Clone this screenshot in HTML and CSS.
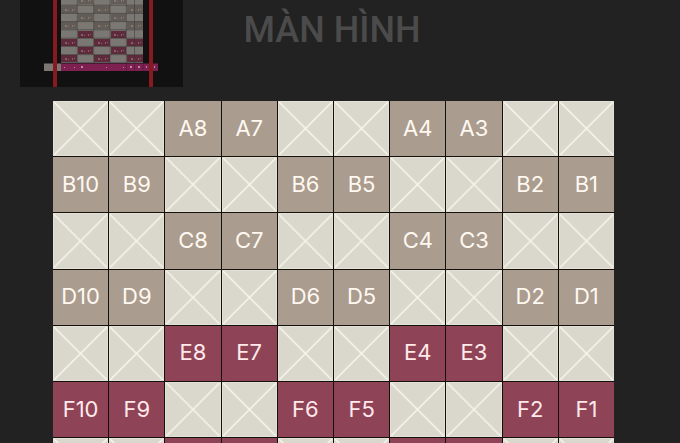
FILE: index.html
```
<!DOCTYPE html>
<html lang="vi">
<head>
<meta charset="utf-8">
<meta name="viewport" content="width=device-width, initial-scale=1">
<title>Màn hình</title>
<link rel="stylesheet" href="styles.css">
</head>
<body>
<main class="room">
<header class="top">
<svg class="minimap" viewBox="0 0 163 87" aria-hidden="true">
<defs>
<g id="dots" fill="#a39994"><path d="M4 3h2v2h-2zM7 4h1v1h-1zM11 3h1v2h-1zM13 3h1v1h-1z" opacity=".5"/></g>
<g id="odd"><path d="M0 0h16v7h-16zM33 0h16v7h-16zM66 0h16v7h-16z"/><use href="#dots"/><use href="#dots" x="33"/><use href="#dots" x="66"/></g>
<g id="even"><path d="M17 0h15v7h-15zM50 0h15v7h-15z"/><use href="#dots" x="16"/><use href="#dots" x="49"/></g>
</defs>
<rect width="163" height="87" fill="#111"/>
<path d="M41 0h82v63h-82z" fill="#7b7873"/>
<g fill="#635b56"><use href="#even" x="41" y="-3"/><use href="#odd" x="41" y="6"/><use href="#even" x="41" y="14"/><use href="#odd" x="41" y="22"/></g>
<g fill="#5f2a3c"><use href="#even" x="41" y="31"/><use href="#odd" x="41" y="39"/><use href="#even" x="41" y="47"/><use href="#odd" x="41" y="55"/></g>
<path d="M41 5.2h82M41 13.4h82M41 21.6h82M41 29.8h82M41 38.2h82M41 46.4h82M41 54.6h82M41 62.8h82" stroke="#2b2928" stroke-width=".5"/>
<path d="M57.3 0v63M73.7 0v63M90 0v63M106.3 0v63M114.5 0v63" stroke="#383533" stroke-width=".5"/>
<path d="M24 63.5h17v7.5h-17z" fill="#7b7873"/>
<path d="M41 63.5h97v7.5h-97z" fill="#7e2052"/>
<path d="M106.5 63.5v7.5M114.5 63.5v7.5M123 63.5v7.5" stroke="#4a1834" stroke-width=".6"/>
<path d="M44 67h1v1h-1zM54 67h1v1h-1zM61 66h2v2h-2zM86 67h1v1h-1zM103 67h1v1h-1zM110 66h2v2h-2zM118 66h2v2h-2zM126 66h1v2h-1zM134 66h1v2h-1z" fill="#b88aa0"/>
<path d="M33 0h4v87h-4zM129 0h4v87h-4z" fill="#861a1e"/>
</svg>
<h1 class="screen">MÀN HÌNH</h1>
</header>
<section class="seats" aria-label="Sơ đồ ghế">
<i></i><i></i><button>A8</button><button>A7</button><i></i><i></i><button>A4</button><button>A3</button><i></i><i></i>
<button>B10</button><button>B9</button><i></i><i></i><button>B6</button><button>B5</button><i></i><i></i><button>B2</button><button>B1</button>
<i></i><i></i><button>C8</button><button>C7</button><i></i><i></i><button>C4</button><button>C3</button><i></i><i></i>
<button>D10</button><button>D9</button><i></i><i></i><button>D6</button><button>D5</button><i></i><i></i><button>D2</button><button>D1</button>
<i></i><i></i><button class="vip">E8</button><button class="vip">E7</button><i></i><i></i><button class="vip">E4</button><button class="vip">E3</button><i></i><i></i>
<button class="vip">F10</button><button class="vip">F9</button><i></i><i></i><button class="vip">F6</button><button class="vip">F5</button><i></i><i></i><button class="vip">F2</button><button class="vip">F1</button>
<i></i><i></i><b></b><b></b><i></i><i></i><b></b><b></b><i></i><i></i>
</section>
</main>
</body>
</html>
```
FILE: styles.css
```
* {
  box-sizing: border-box;
}

body {
  margin: 0;
  background: #222;
  font-family: Inter, "Liberation Sans", sans-serif;
}

.room {
  height: 100vh;
  overflow: hidden;
}

.top {
  display: grid;
  grid-template-columns: 1fr auto 1fr;
  align-items: start;
  padding: 0 36px 0 20px;
}

.minimap {
  display: block;
  width: 163px;
  height: 87px;
}

.screen {
  margin: 9px 0 0;
  color: #4b4b4b;
  font-family: Roboto, sans-serif;
  font-size: 36px;
  font-weight: 500;
  line-height: 42px;
}

.seats {
  display: grid;
  grid-template-columns: repeat(10, 1fr);
  gap: 1px;
  margin: 14px 66px 0 53px;
  background: #14110c;
}

.seats > * {
  aspect-ratio: 1;
  min-width: 0;
}

.seats i {
  box-shadow: inset 0 0 0 1px #e3e0d6;
  background:
    linear-gradient(45deg, transparent 48%, #f6f4ea 50%, transparent 52%),
    linear-gradient(-45deg, transparent 48%, #f6f4ea 50%, transparent 52%),
    #dad7cc;
}

.seats button {
  padding: 0 0 2px;
  border: 0;
  background: #aa9c8f;
  color: #fff8f0;
  font: 400 22px/26px Inter, "Liberation Sans", sans-serif;
}

.seats .vip,
.seats b {
  background: #8f4356;
}

.seats .vip {
  color: #ffe9ea;
}
```
